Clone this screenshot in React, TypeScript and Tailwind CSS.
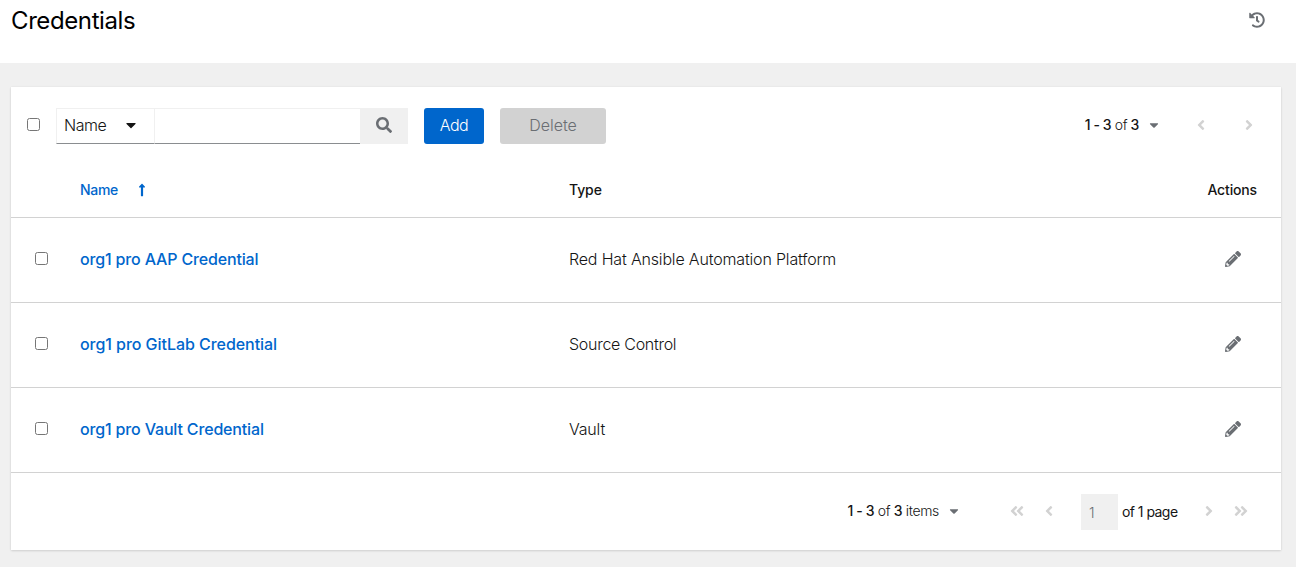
import type { ReactNode } from "react";
import {
  FaAngleDoubleLeft,
  FaAngleDoubleRight,
  FaAngleLeft,
  FaAngleRight,
  FaCaretDown,
  FaHistory,
  FaLongArrowAltUp,
  FaPencilAlt,
  FaSearch,
} from "react-icons/fa";

const credentials = [
  {
    name: "org1 pro AAP Credential",
    type: "Red Hat Ansible Automation Platform",
    nameTracking: "tracking-[-0.16px]",
    typeTracking: "tracking-[-0.17px]",
  },
  {
    name: "org1 pro GitLab Credential",
    type: "Source Control",
    nameTracking: "tracking-[-0.05px]",
    typeTracking: "tracking-[-0.28px]",
  },
  {
    name: "org1 pro Vault Credential",
    type: "Vault",
    nameTracking: "tracking-[-0.16px]",
    typeTracking: "tracking-[-0.2px]",
  },
];

function Checkbox({ label }: { label: string }) {
  return <input type="checkbox" aria-label={label} className="block size-[13px] shrink-0" />;
}

function PageButton({ label, className, children }: { label: string; className: string; children: ReactNode }) {
  return (
    <button aria-label={label} disabled className={`flex h-9 items-center justify-center text-[#d2d2d2] ${className}`}>
      {children}
    </button>
  );
}

export default function App() {
  return (
    <div className="flex h-[567px] w-full flex-col overflow-hidden bg-[#f0f0f0] font-['Inter',sans-serif] text-[#151515]">
      <header className="flex h-[63px] shrink-0 items-start justify-between bg-white pr-[31px] pl-[11px]">
        <h1 className="mt-[5px] text-2xl leading-[31px] tracking-[-0.4px] text-black">Credentials</h1>
        <button aria-label="View history" className="mt-3 text-[#6a6e73]">
          <FaHistory size={16} />
        </button>
      </header>

      <main className="mt-6 mr-[15px] ml-[11px] flex h-[463px] flex-col bg-white shadow-[0_1px_2px_0_rgba(3,3,3,0.12),0_0_2px_0_rgba(3,3,3,0.06)]">
        <div className="flex h-[76px] shrink-0 items-center pt-[2px] pl-4">
          <div className="-mt-[3px] mr-[16px]">
            <Checkbox label="Select all" />
          </div>
          <button className="flex h-9 w-[98px] items-center justify-between border border-r-0 border-[#f0f0f0] border-b-[#8a8d90] pr-[15px] pl-[7px] text-base font-light tracking-[-0.5px]">
            <span className="pb-[2px]">Name</span>
            <FaCaretDown size={16} className="mb-[2px]" />
          </button>
          <input
            aria-label="Search"
            className="h-9 w-[206px] border border-r-0 border-[#f0f0f0] border-b-[#8a8d90] px-2 outline-none"
          />
          <button aria-label="Search" className="flex h-9 w-12 items-center justify-center bg-[#f0f0f0] pb-[2px] text-[#6a6e73]">
            <FaSearch size={16} />
          </button>
          <button className="ml-4 h-9 w-[60px] rounded-[3px] bg-[#0066cc] pb-[2px] text-base font-light tracking-[-0.5px] text-white">
            Add
          </button>
          <button disabled className="ml-4 h-9 w-[106px] rounded-[3px] bg-[#d2d2d2] pb-[2px] text-base font-light text-[#6a6e73]">
            Delete
          </button>
          <div className="ml-auto flex items-center pr-4">
            <button className="flex items-center text-sm tracking-[-0.4px]">
              <span className="pb-[2px]">
                <span className="font-medium">1 - 3</span> <span className="font-light">of</span>{" "}
                <span className="font-medium">3</span>
              </span>
              <FaCaretDown size={14} className="mb-[2px] ml-2 text-[#6a6e73]" />
            </button>
            <PageButton label="Previous page" className="ml-[16px] w-[47px] pb-[2px]">
              <FaAngleLeft size={16} />
            </PageButton>
            <PageButton label="Next page" className="ml-2 w-[33px] pb-[2px]">
              <FaAngleRight size={16} />
            </PageButton>
          </div>
        </div>

        <table className="w-full table-fixed border-collapse text-left">
          <colgroup>
            <col className="w-[69px]" />
            <col className="w-[489px]" />
            <col />
            <col className="w-[96px]" />
          </colgroup>
          <thead>
            <tr className="h-[54px] border-b border-[#d2d2d2] text-sm">
              <th />
              <th className="p-0 font-medium text-[#0066cc]">
                <span className="flex items-center tracking-[-0.3px]">
                  Name
                  <FaLongArrowAltUp size={14} className="ml-[17px]" />
                </span>
              </th>
              <th className="p-0 font-medium tracking-[-0.1px]">Type</th>
              <th className="p-0 pr-6 text-right font-medium tracking-[-0.15px]">Actions</th>
            </tr>
          </thead>
          <tbody>
            {credentials.map((credential) => (
              <tr key={credential.name} className="h-[85px] border-b border-[#d2d2d2]">
                <td className="p-0 pb-[3px] pl-6">
                  <Checkbox label={`Select ${credential.name}`} />
                </td>
                <td className={`p-0 pb-[2px] font-medium text-[#0066cc] ${credential.nameTracking}`}>
                  {credential.name}
                </td>
                <td className={`p-0 pb-[2px] font-light ${credential.typeTracking}`}>{credential.type}</td>
                <td className="p-0 pr-10 pb-[2px]">
                  <button aria-label={`Edit ${credential.name}`} className="ml-auto block text-[#6a6e73]">
                    <FaPencilAlt size={16} />
                  </button>
                </td>
              </tr>
            ))}
          </tbody>
        </table>

        <div className="flex h-[78px] items-center justify-end pr-6">
          <button className="flex items-center text-sm tracking-[-0.35px]">
            <span className="pb-px">
              <span className="font-medium">1 - 3</span> <span className="font-light">of</span>{" "}
              <span className="font-medium">3</span> <span className="font-light">items</span>
            </span>
            <FaCaretDown size={14} className="ml-2 text-[#6a6e73]" />
          </button>
          <PageButton label="First page" className="ml-[40px] w-[32px] pb-px">
            <FaAngleDoubleLeft size={16} />
          </PageButton>
          <PageButton label="Previous" className="w-[32px] pb-px">
            <FaAngleLeft size={16} />
          </PageButton>
          <input
            aria-label="Current page"
            disabled
            value="1"
            readOnly
            className="mt-[2px] ml-4 h-9 w-[37px] bg-[#f0f0f0] pl-2 text-sm font-light text-[#6a6e73]"
          />
          <span className="mt-[2px] ml-1 w-[55px] text-sm tracking-[-0.55px] whitespace-nowrap">of 1 page</span>
          <PageButton label="Next" className="ml-4 w-[32px] pb-px">
            <FaAngleRight size={16} />
          </PageButton>
          <PageButton label="Last page" className="w-[32px] pb-px">
            <FaAngleDoubleRight size={16} />
          </PageButton>
        </div>
      </main>
    </div>
  );
}
